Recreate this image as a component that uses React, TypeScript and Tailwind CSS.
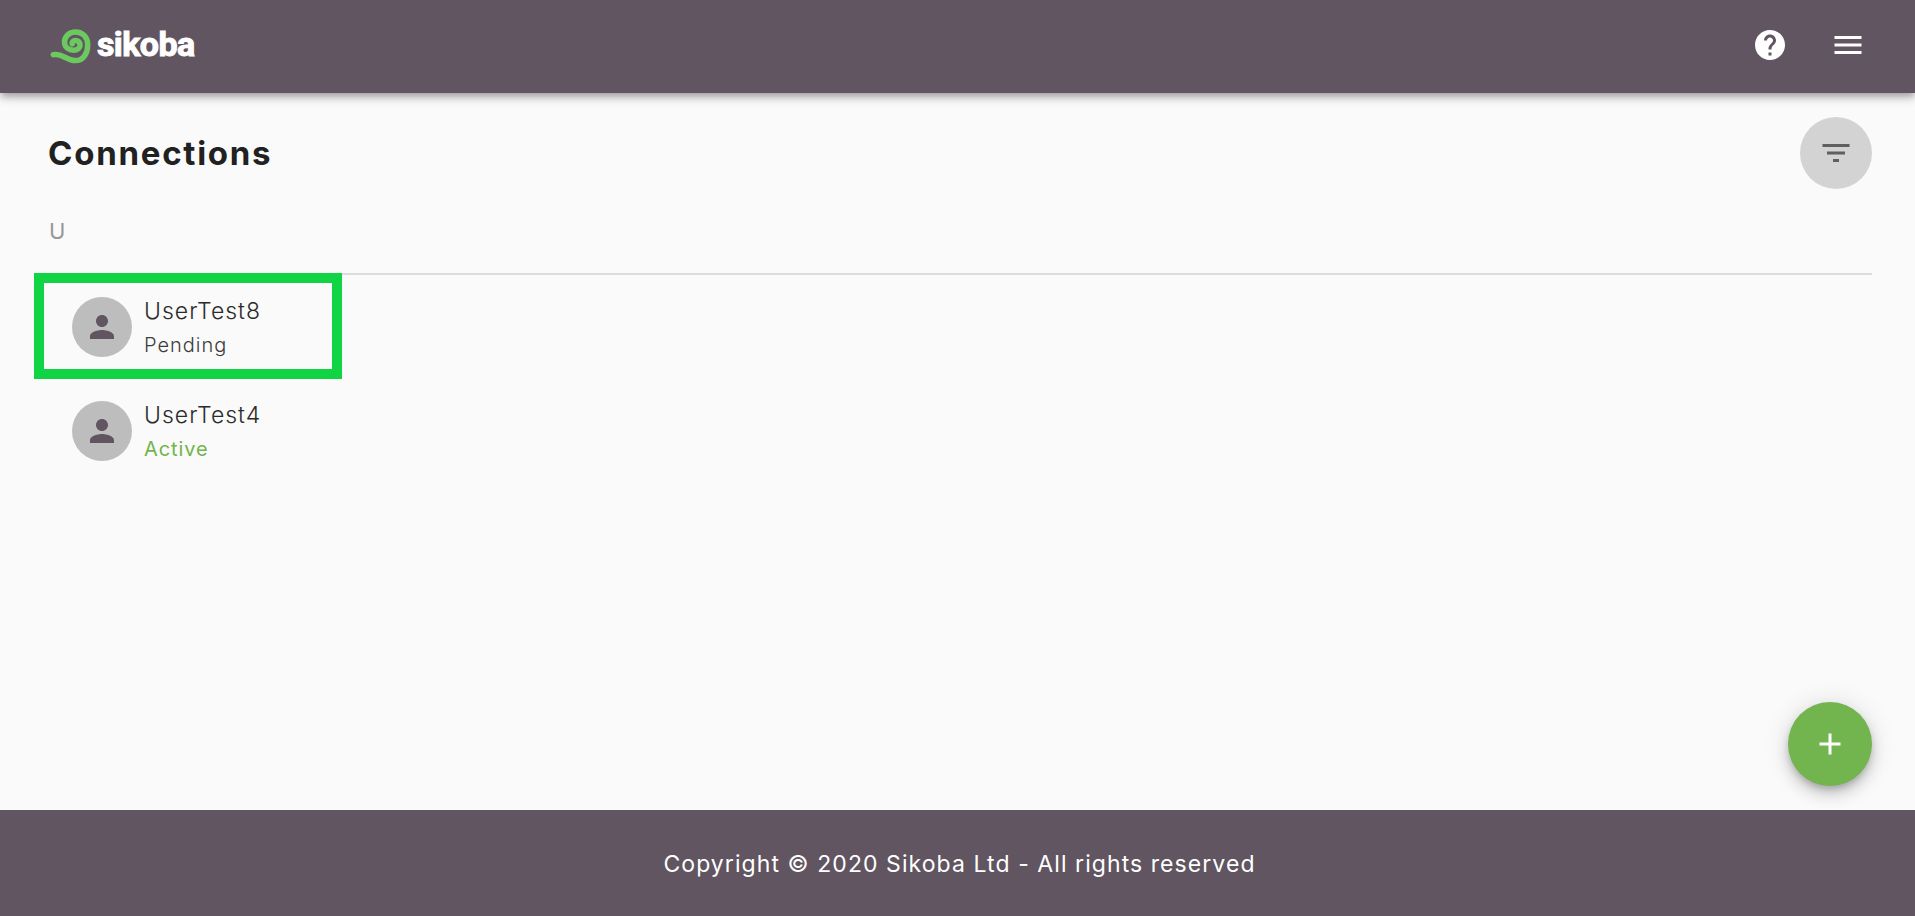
import React from "react";

const path = {
  help: "M12 2C6.48 2 2 6.48 2 12s4.48 10 10 10 10-4.48 10-10S17.52 2 12 2zm1 17h-2v-2h2v2zm2.07-7.75l-.9.92C13.45 12.9 13 13.5 13 15h-2v-.5c0-1.1.45-2.1 1.17-2.83l1.24-1.26c.37-.36.59-.86.59-1.41 0-1.1-.9-2-2-2s-2 .9-2 2H8c0-2.21 1.79-4 4-4s4 1.79 4 4c0 .88-.36 1.68-.93 2.25z",
  menu: "M3 18h18v-2H3v2zm0-5h18v-2H3v2zm0-7v2h18V6H3z",
  filter: "M10 18h4v-2h-4v2zM3 6v2h18V6H3zm3 7h12v-2H6v2z",
  person: "M12 12c2.21 0 4-1.79 4-4s-1.79-4-4-4-4 1.79-4 4 1.79 4 4 4zm0 2c-2.67 0-8 1.34-8 4v2h16v-2c0-2.66-5.33-4-8-4z",
  add: "M19 13h-6v6h-2v-6H5v-2h6V5h2v6h6v2z",
};

function Icon({ name }: { name: keyof typeof path }) {
  return (
    <svg viewBox="0 0 24 24" className="size-9 shrink-0 fill-current" aria-hidden="true">
      <path d={path[name]} />
    </svg>
  );
}

function Logo() {
  return (
    <div className="flex items-start pt-[26px]">
      <svg width="44" height="40" viewBox="48 26 44 40" className="shrink-0" aria-hidden="true">
        <path
          d="M53.300 54.700C62 52.500 66 60.600 75.500 60.600C83.500 60.600 87.700 53 87.700 45C87.700 37 82.500 31.900 75.500 31.900C69 31.900 64.500 36.500 64.500 42C64.500 47.500 69 50.200 73.500 50.200C77.800 50.200 80.100 47.600 80.100 45C80.100 42 77.800 40.400 75.500 40.400C73.300 40.400 71.800 42 72.200 43.800"
          fill="none" stroke="#6cc960" strokeWidth="5.500" strokeLinecap="round" strokeLinejoin="round"
        />
      </svg>
      <span className="-mt-1 ml-[5px] font-['Roboto',sans-serif] text-[34px] leading-[44px] font-bold tracking-[-0.6px] [-webkit-text-stroke:1px_white] [stroke-linejoin:round]">sikoba</span>
    </div>
  );
}

function Connection({ name, status, active = false }: { name: string; status: string; active?: boolean }) {
  return (
    <li className="flex h-[104px] items-center gap-3 pl-[23px]">
      <span className="flex size-[60px] items-center justify-center rounded-full bg-[#bdbdbd] text-[#605560]">
        <Icon name="person" />
      </span>
      <div className="flex flex-col pt-0.5">
        <span className="text-[23px] leading-[34px] font-[350] tracking-[1px] text-[#2b2b2b]">{name}</span>
        <span className={active ? "text-[20px] leading-[34px] tracking-[0.9px] text-[#72b44d]" : "text-[20px] leading-[34px] font-[350] tracking-[1px] text-[#3c3c3c]"}>{status}</span>
      </div>
    </li>
  );
}

export default function App() {
  return (
    <div className="flex h-screen flex-col overflow-hidden bg-[#fafafa] font-['Inter',sans-serif]">
      <header className="relative z-10 flex h-[93px] shrink-0 items-start justify-between bg-[#605560] pr-[49px] pl-12 text-white shadow-[0_3px_6px_-1.5px_rgba(0,0,0,0.2),0_6px_7.5px_0_rgba(0,0,0,0.14),0_1.5px_15px_0_rgba(0,0,0,0.12)]">
        <Logo />
        <nav className="flex gap-[42px] pt-[27px]">
          <button aria-label="Help"><Icon name="help" /></button>
          <button aria-label="Menu"><Icon name="menu" /></button>
        </nav>
      </header>
      <main className="relative flex-1 pr-[43px] pl-12 pt-6">
        <div className="flex h-[72px] items-center justify-between">
          <h1 className="text-[33px] leading-[40px] font-[650] tracking-[1.75px] text-[#212121]">Connections</h1>
          <button aria-label="Filter" className="flex size-[72px] items-center justify-center rounded-full bg-[#d3d3d3] text-[#605f60]">
            <Icon name="filter" />
          </button>
        </div>
        <h2 className="ml-px flex h-[86px] items-center border-b-2 border-[#dcdcdc] text-[22px] font-normal text-[#979797]">U</h2>
        <ul className="relative ml-px">
          <Connection name="UserTest8" status="Pending" />
          <Connection name="UserTest4" status="Active" active />
          <li aria-hidden="true" className="absolute -top-0.5 -left-[15px] h-[106px] w-[308px] border-[10px] border-[#11d445]" />
        </ul>
        <button aria-label="Add" className="absolute right-[43px] bottom-6 flex size-[84px] items-center justify-center rounded-full bg-[#72b44d] text-white shadow-[0_4.5px_7.5px_-1.5px_rgba(0,0,0,0.2),0_9px_15px_0_rgba(0,0,0,0.14),0_1.5px_27px_0_rgba(0,0,0,0.12)]">
          <Icon name="add" />
        </button>
      </main>
      <footer className="flex h-[106px] shrink-0 items-center justify-center bg-[#605560] pt-0.5 pl-1 text-[23px] tracking-[1.07px] text-white">
        Copyright © 2020 Sikoba Ltd - All rights reserved
      </footer>
    </div>
  );
}
